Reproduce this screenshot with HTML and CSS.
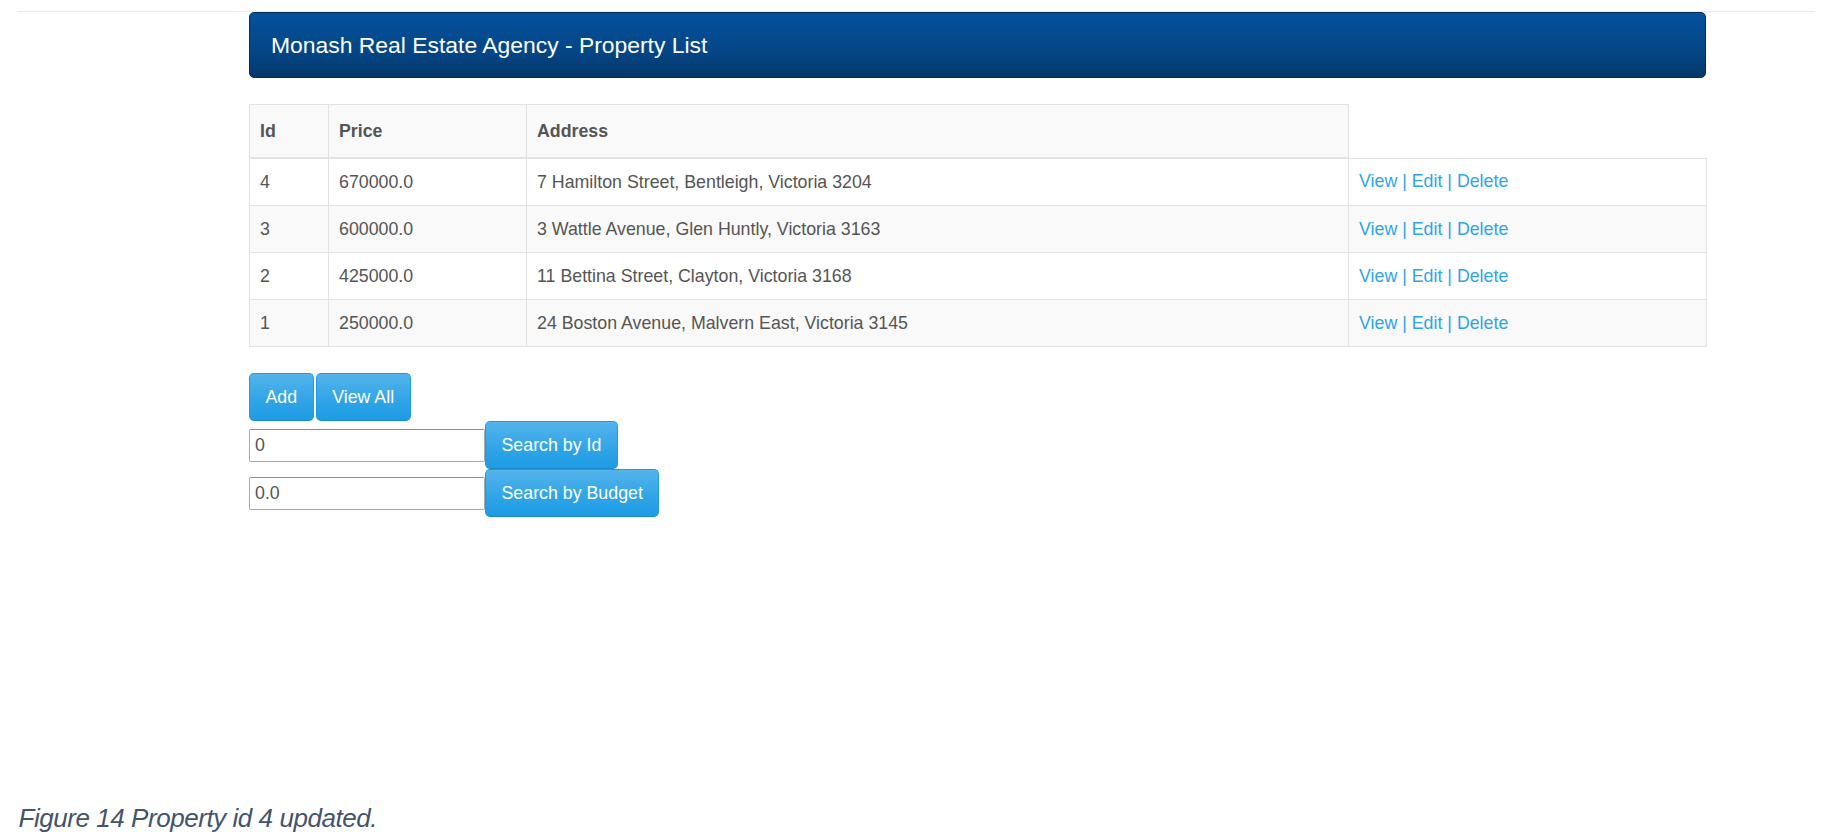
FILE: index.html
```html
<!DOCTYPE html>
<html lang="en">
<head>
<meta charset="utf-8">
<title>Monash Real Estate Agency - Property List</title>
<link rel="stylesheet" href="styles.css">
</head>
<body>
<div class="page">
  <div class="topline"></div>
  <main class="content">
    <header class="banner">Monash Real Estate Agency - Property List</header>
    <table class="props">
      <colgroup>
        <col class="c-id"><col class="c-price"><col class="c-addr"><col class="c-act">
      </colgroup>
      <thead>
        <tr><th>Id</th><th>Price</th><th>Address</th></tr>
      </thead>
      <tbody>
        <tr><td>4</td><td>670000.0</td><td>7 Hamilton Street, Bentleigh, Victoria 3204</td><td class="links"><a href="#">View</a> | <a href="#">Edit</a> | <a href="#">Delete</a></td></tr>
        <tr><td>3</td><td>600000.0</td><td>3 Wattle Avenue, Glen Huntly, Victoria 3163</td><td class="links"><a href="#">View</a> | <a href="#">Edit</a> | <a href="#">Delete</a></td></tr>
        <tr><td>2</td><td>425000.0</td><td>11 Bettina Street, Clayton, Victoria 3168</td><td class="links"><a href="#">View</a> | <a href="#">Edit</a> | <a href="#">Delete</a></td></tr>
        <tr><td>1</td><td>250000.0</td><td>24 Boston Avenue, Malvern East, Victoria 3145</td><td class="links"><a href="#">View</a> | <a href="#">Edit</a> | <a href="#">Delete</a></td></tr>
      </tbody>
    </table>
    <div class="actions">
      <div class="btn-row"><button class="btn">Add</button><button class="btn">View All</button></div>
      <div class="search-row"><input class="field" type="text" value="0"><button class="btn">Search by Id</button></div>
      <div class="search-row"><input class="field" type="text" value="0.0"><button class="btn">Search by Budget</button></div>
    </div>
  </main>
  <p class="caption">Figure 14 Property id 4 updated.</p>
</div>
</body>
</html>
```
FILE: styles.css
```css
* { box-sizing: border-box; }
body {
  margin: 0;
  background: #fff;
  font-family: "Liberation Sans", Arial, Helvetica, sans-serif;
  color: #555;
}
.page { padding-top: 11px; }
.topline {
  margin: 0 11px 0 17px;
  height: 1px;
  background: #ececec;
}
.content {
  margin-left: 249px;
  width: 1457px;
}
.banner {
  height: 66px;
  display: flex;
  align-items: center;
  padding-left: 21px;
  padding-top: 1px;
  font-size: 22.9px;
  color: #fff;
  border: 1px solid #03305b;
  border-radius: 5px;
  background: linear-gradient(#04519b, #044687 60%, #033769);
}
.props {
  margin-top: 26px;
  width: 1457px;
  table-layout: fixed;
  border-collapse: collapse;
  font-size: 17.8px;
  color: #555;
}
.c-id { width: 79px; }
.c-price { width: 198px; }
.c-addr { width: 822px; }
.c-act { width: 358px; }
.props th, .props td {
  border: 1px solid #e2e2e2;
  padding: 10.5px 10px;
  line-height: 25px;
  text-align: left;
  vertical-align: middle;
}
.props th {
  font-weight: bold;
  background: #f9f9f9;
  padding-top: 13.5px;
  padding-bottom: 13.5px;
  border-bottom-width: 2px;
}
.props tbody tr:nth-child(even) td { background: #f9f9f9; }
.links { color: #2fa4e7; }
.links a { color: #2fa4e7; text-decoration: none; }
.actions { margin-top: 26px; }
.btn-row { display: flex; gap: 2px; }
.search-row { display: flex; align-items: center; }
.btn {
  font-family: inherit;
  font-size: 17.8px;
  line-height: 25px;
  padding: 10.5px 15.5px;
  color: #fff;
  border: 1px solid #1d9ce5;
  border-bottom-color: #178acc;
  border-radius: 5px;
  background: linear-gradient(#54b4eb, #2fa4e7 60%, #1d9ce5);
  cursor: pointer;
}
.field {
  width: 236px;
  height: 33px;
  margin: 0;
  padding: 0 5px;
  font-family: inherit;
  font-size: 17.8px;
  color: #555;
  border: 1px solid #a9a9a9;
  border-top-color: #8f8f8f;
  border-radius: 2px;
  background: #fff;
}
.caption {
  margin: 286px 0 0 18.5px;
  font-size: 26px;
  line-height: 30px;
  letter-spacing: -0.45px;
  font-style: italic;
  color: #44546a;
}
```
